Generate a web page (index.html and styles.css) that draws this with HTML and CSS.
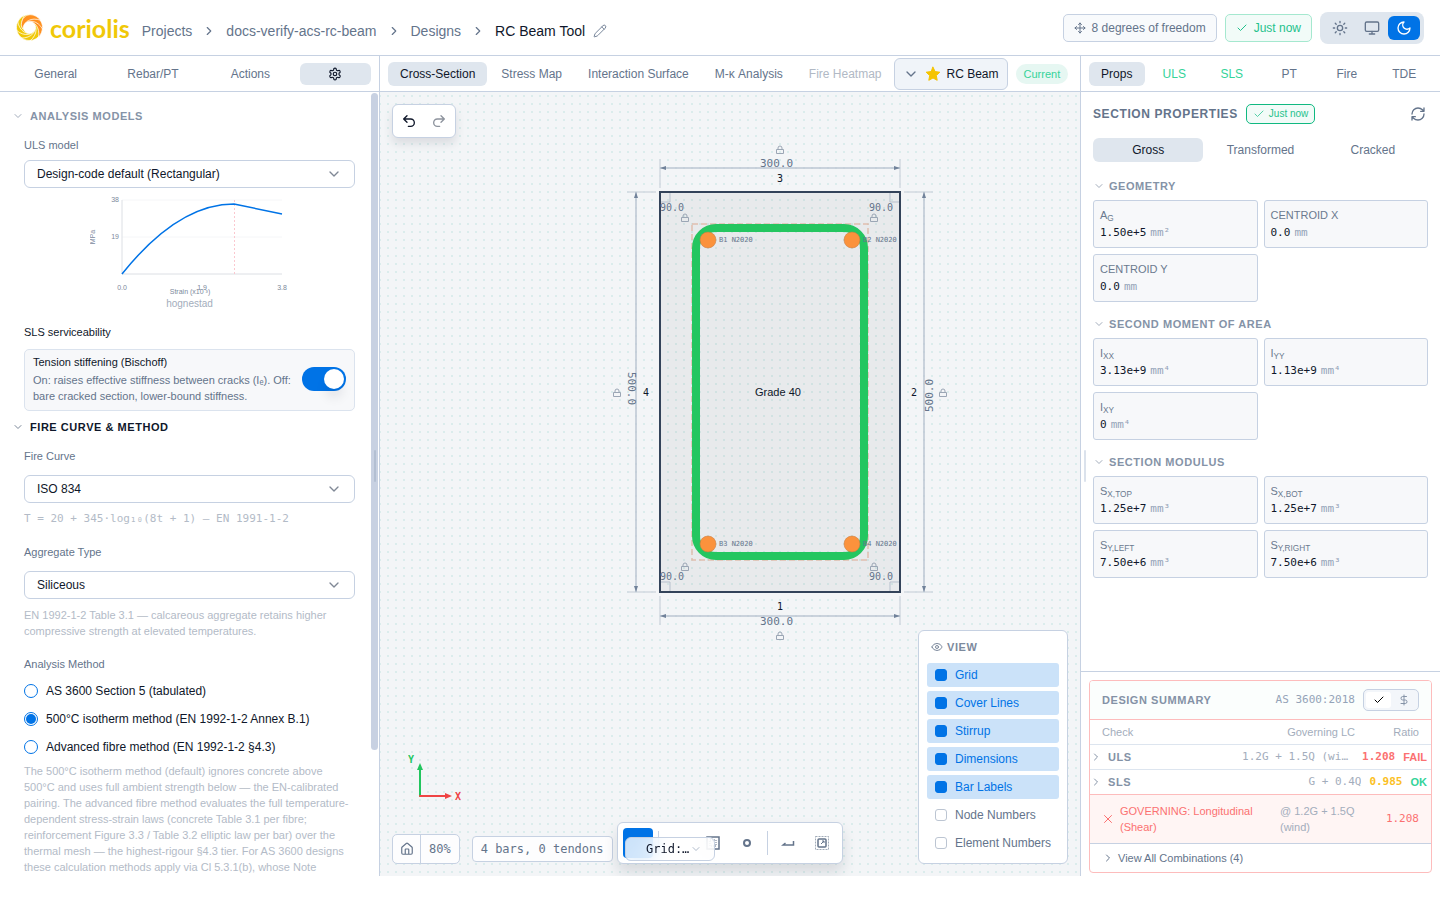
FILE: index.html
```html
<!DOCTYPE html>
<html lang="en">
<head>
<meta charset="utf-8">
<title>RC Beam Tool</title>
<link rel="stylesheet" href="styles.css">
</head>
<body>
<svg class="sprite" aria-hidden="true">
  <symbol id="chev-r" viewBox="0 0 24 24"><path d="m9 18 6-6-6-6"/></symbol>
  <symbol id="chev-d" viewBox="0 0 24 24"><path d="m6 9 6 6 6-6"/></symbol>
  <symbol id="check" viewBox="0 0 24 24"><path d="M20 6 9 17l-5-5"/></symbol>
  <symbol id="cross" viewBox="0 0 24 24"><path d="M19 5 5 19M5 5l14 14"/></symbol>
  <symbol id="blade" viewBox="-14 -14 28 28" overflow="visible"><path d="M4-13.200C-7-15.500-14.500-7-9.500 1.500C-8.500 3.500-7 5-4.500 5.500C-8.500-1-6-9.500 4-13.200Z"/></symbol>
  <symbol id="lock" viewBox="0 0 10 10"><path d="M1.500 4.500h7v4h-7zM3 4.500V3a2 2 0 0 1 4 0v1.500"/></symbol>
</svg>
<div class="app">
  <header class="topbar">
    <a class="logo" href="#">
      <svg class="logo-mark" viewBox="-14 -14 28 28">
        <g class="gold">
          <use href="#blade" x="-14" y="-14" width="28" height="28"/>
          <g transform="rotate(-40)"><use href="#blade" x="-14" y="-14" width="28" height="28"/></g>
          <g transform="rotate(-80)"><use href="#blade" x="-14" y="-14" width="28" height="28"/></g>
          <g transform="rotate(-120)"><use href="#blade" x="-14" y="-14" width="28" height="28"/></g>
          <g transform="rotate(-160)"><use href="#blade" x="-14" y="-14" width="28" height="28"/></g>
          <g transform="rotate(-200)"><use href="#blade" x="-14" y="-14" width="28" height="28"/></g>
        </g>
        <g class="orange">
          <g transform="rotate(120)"><use href="#blade" x="-14" y="-14" width="28" height="28"/></g>
          <g transform="rotate(80)"><use href="#blade" x="-14" y="-14" width="28" height="28"/></g>
          <g transform="rotate(40)"><use href="#blade" x="-14" y="-14" width="28" height="28"/></g>
        </g>
      </svg>
      <span class="wordmark">coriolis</span>
    </a>
    <nav class="crumbs">
      <a href="#">Projects</a><svg class="i14"><use href="#chev-r"/></svg>
      <a href="#">docs-verify-acs-rc-beam</a><svg class="i14"><use href="#chev-r"/></svg>
      <a href="#">Designs</a><svg class="i14"><use href="#chev-r"/></svg>
      <span class="here">RC Beam Tool</span>
      <button class="bare edit" aria-label="Rename"><svg class="i14 thin" viewBox="0 0 24 24"><path d="M21.200 6.800a1 1 0 0 0-4-4L3.800 16.200a2 2 0 0 0-.5.800L2 21.400a.5.5 0 0 0 .6.600l4.400-1.300a2 2 0 0 0 .8-.5zM15 5l4 4"/></svg></button>
    </nav>
    <div class="status">
      <span class="chip"><svg class="i12" viewBox="0 0 24 24"><path d="M12 2v20M2 12h20M15 19l-3 3-3-3M19 9l3 3-3 3M5 9l-3 3 3 3M9 5l3-3 3 3"/></svg>8 degrees of freedom</span>
      <span class="chip fresh"><svg class="i12"><use href="#check"/></svg>Just now</span>
      <div class="theme">
        <button aria-label="Light"><svg class="i16" viewBox="0 0 24 24"><circle cx="12" cy="12" r="4"/><path d="M12 2v2M12 20v2M4.900 4.900l1.400 1.400M17.700 17.700l1.400 1.400M2 12h2M20 12h2M6.300 17.700l-1.400 1.400M19.100 4.900l-1.400 1.400"/></svg></button>
        <button aria-label="System"><svg class="i16" viewBox="0 0 24 24"><rect x="2" y="3" width="20" height="14" rx="2"/><path d="M8 21h8M12 17v4"/></svg></button>
        <button class="on" aria-label="Dark"><svg class="i16" viewBox="0 0 24 24"><path d="M12 3a6 6 0 0 0 9 9 9 9 0 1 1-9-9Z"/></svg></button>
      </div>
    </div>
  </header>

  <main class="work">
    <aside class="left">
      <nav class="tabs left-tabs">
        <button>General</button><button>Rebar/PT</button><button>Actions</button>
        <button class="on gear" aria-label="Settings"><svg class="i14" viewBox="0 0 24 24"><path d="M12.200 2h-.4a2 2 0 0 0-2 2v.2a2 2 0 0 1-1 1.700l-.4.300a2 2 0 0 1-2 0l-.2-.1a2 2 0 0 0-2.700.7l-.2.400a2 2 0 0 0 .7 2.700l.2.100a2 2 0 0 1 1 1.700v.5a2 2 0 0 1-1 1.800l-.2.100a2 2 0 0 0-.7 2.700l.2.400a2 2 0 0 0 2.700.7l.2-.1a2 2 0 0 1 2 0l.4.300a2 2 0 0 1 1 1.700v.2a2 2 0 0 0 2 2h.4a2 2 0 0 0 2-2v-.2a2 2 0 0 1 1-1.700l.4-.3a2 2 0 0 1 2 0l.2.100a2 2 0 0 0 2.700-.7l.2-.4a2 2 0 0 0-.7-2.700l-.2-.1a2 2 0 0 1-1-1.800v-.5a2 2 0 0 1 1-1.700l.2-.1a2 2 0 0 0 .7-2.700l-.2-.4a2 2 0 0 0-2.700-.7l-.2.100a2 2 0 0 1-2 0l-.4-.3a2 2 0 0 1-1-1.700V4a2 2 0 0 0-2-2z"/><circle cx="12" cy="12" r="3"/></svg></button>
      </nav>
      <div class="scroll">
        <button class="sect muted"><svg class="i12"><use href="#chev-d"/></svg>ANALYSIS MODELS</button>
        <div class="fields">
          <label class="lbl" for="uls">ULS model</label>
          <div class="sel tight"><select id="uls"><option>Design-code default (Rectangular)</option></select><svg class="i16"><use href="#chev-d"/></svg></div>
          <svg class="curve" viewBox="0 0 200 104">
            <path class="gridline" d="M32 8h160M32 45h160"/>
            <path class="axis" d="M32 8v74h160"/>
            <path class="limit" d="M144.500 8v74"/>
            <path class="plot" d="M32 82Q88 12 144 12Q168 17 192 22"/>
            <text x="29" y="10" text-anchor="end">38</text><text x="29" y="47" text-anchor="end">19</text>
            <text x="32" y="98" text-anchor="middle">0.0</text><text x="112" y="98" text-anchor="middle">1.9</text><text x="192" y="98" text-anchor="middle">3.8</text>
            <text x="100" y="102" text-anchor="middle">Strain (x10⁻³)</text>
            <text transform="translate(5 45) rotate(-90)" text-anchor="middle">MPa</text>
          </svg>
          <p class="caption">hognestad</p>
          <h3 class="sub">SLS serviceability</h3>
          <div class="card-toggle">
            <div><label for="ts">Tension stiffening (Bischoff)</label>
            <p>On: raises effective stiffness between cracks (Iₑ). Off: bare cracked section, lower-bound stiffness.</p></div>
            <input id="ts" class="switch" type="checkbox" role="switch" checked>
          </div>
        </div>
        <button class="sect second"><svg class="i12"><use href="#chev-d"/></svg>FIRE CURVE &amp; METHOD</button>
        <div class="fields">
          <label class="lbl" for="fc">Fire Curve</label>
          <div class="sel"><select id="fc"><option>ISO 834</option></select><svg class="i16"><use href="#chev-d"/></svg></div>
          <p class="note mono">T = 20 + 345·log₁₀(8t + 1) — EN 1991-1-2</p>
          <label class="lbl far" for="ag">Aggregate Type</label>
          <div class="sel"><select id="ag"><option>Siliceous</option></select><svg class="i16"><use href="#chev-d"/></svg></div>
          <p class="note">EN 1992-1-2 Table 3.1 — calcareous aggregate retains higher compressive strength at elevated temperatures.</p>
          <fieldset>
            <legend class="lbl">Analysis Method</legend>
            <label class="radio"><input type="radio" name="m">AS 3600 Section 5 (tabulated)</label>
            <label class="radio"><input type="radio" name="m" checked>500°C isotherm method (EN 1992-1-2 Annex B.1)</label>
            <label class="radio"><input type="radio" name="m">Advanced fibre method (EN 1992-1-2 §4.3)</label>
          </fieldset>
          <p class="note">The 500°C isotherm method (default) ignores concrete above 500°C and uses full ambient strength below — the EN-calibrated pairing. The advanced fibre method evaluates the full temperature-dependent stress-strain laws (concrete Table 3.1 per fibre; reinforcement Figure 3.3 / Table 3.2 elliptic law per bar) over the thermal mesh — the highest-rigour §4.3 tier. For AS 3600 designs these calculation methods apply via Cl 5.3.1(b), whose Note</p>
        </div>
      </div>
      <div class="scrollbar"></div>
      <div class="grip"></div>
    </aside>

    <section class="center">
      <nav class="tabs mid-tabs">
        <button class="on">Cross-Section</button><button>Stress Map</button><button>Interaction Surface</button><button>M-κ Analysis</button><button class="off" disabled>Fire Heatmap</button>
        <button class="beam"><svg class="i16"><use href="#chev-d"/></svg><svg class="star" viewBox="0 0 16 16"><path d="m8 1.200 2.100 4.400 4.700.6-3.500 3.300.9 4.800L8 12l-4.200 2.300.9-4.800L1.200 6.200l4.700-.6z"/></svg>RC Beam</button>
        <span class="current">Current</span>
      </nav>
      <div class="canvas">
        <svg class="drawing" viewBox="0 0 700 784">
          <defs><marker id="arr" viewBox="0 0 6 4" refX="6" refY="2" markerWidth="6" markerHeight="4" markerUnits="userSpaceOnUse" orient="auto-start-reverse"><polygon points="0,0 6,2 0,4" fill="#71829a" stroke="none"/></marker></defs>
          <rect class="concrete" x="280" y="100" width="240" height="400"/>
          <path class="ext" d="M280 67v29M520 67v29M280 504v29M520 504v29M247 100h29M247 500h29M524 100h29M524 500h29"/>
          <path class="corner" d="M290 101v9h-9M510 101v9h9M290 499v-9h-9M510 499v-9h9"/>
          <g class="dim"><path d="M280 76H520"/><path d="M280 524H520"/><path d="M256 100V500"/><path d="M544 100V500"/></g>
          <rect class="cover" x="312" y="132" width="176" height="336"/>
          <rect class="stirrup" x="316" y="136" width="168" height="328" rx="20"/>
          <g class="bar"><circle cx="328" cy="148" r="8"/><circle cx="472" cy="148" r="8"/><circle cx="328" cy="452" r="8"/><circle cx="472" cy="452" r="8"/></g>
          <g class="tag"><text x="339" y="150">B1 N2020</text><text x="483" y="150">B2 N2020</text><text x="339" y="454">B3 N2020</text><text x="483" y="454">B4 N2020</text></g>
          <g class="len"><text x="380" y="75">300.0</text><text x="380" y="533">300.0</text><text transform="translate(248 280) rotate(90)">500.0</text><text transform="translate(553 320) rotate(-90)">500.0</text></g>
          <g class="ang"><text x="280" y="119">90.0</text><text x="489" y="119">90.0</text><text x="280" y="488">90.0</text><text x="489" y="488">90.0</text></g>
          <g class="edge"><text x="400" y="90">3</text><text x="400" y="518">1</text><text x="266" y="304">4</text><text x="534" y="304">2</text></g>
          <text class="grade" x="375" y="304">Grade 40</text>
          <g class="locks">
            <use href="#lock" x="395" y="53" width="10" height="10"/><use href="#lock" x="395" y="539" width="10" height="10"/>
            <use href="#lock" x="232" y="296" width="10" height="10"/><use href="#lock" x="558" y="296" width="10" height="10"/>
            <use href="#lock" x="300" y="121" width="10" height="10"/><use href="#lock" x="489" y="121" width="10" height="10"/>
            <use href="#lock" x="300" y="470" width="10" height="10"/><use href="#lock" x="489" y="470" width="10" height="10"/>
          </g>
        </svg>
        <div class="float history">
          <button aria-label="Undo"><svg class="i16" viewBox="0 0 24 24"><path d="M9 14 4 9l5-5M4 9h10.500a5.500 5.500 0 0 1 0 11H11"/></svg></button>
          <button aria-label="Redo" disabled><svg class="i16" viewBox="0 0 24 24"><path d="m15 14 5-5-5-5M20 9H9.500a5.500 5.500 0 0 0 0 11H13"/></svg></button>
        </div>
        <svg class="triad" viewBox="0 0 60 52">
          <path d="M12 42V14" stroke="#22c55e"/><path d="m12 9 3 7H9z" fill="#22c55e"/>
          <path d="M12 42h28" stroke="#ef4444"/><path d="m44 42-7-3v6z" fill="#ef4444"/>
          <text x="0" y="9" fill="#22c55e">Y</text><text x="47" y="46" fill="#ef4444">X</text>
        </svg>
        <div class="dock">
          <div class="zoomer"><button aria-label="Fit"><svg class="i14" viewBox="0 0 24 24"><path d="M15 21v-8a1 1 0 0 0-1-1h-4a1 1 0 0 0-1 1v8M3 10a2 2 0 0 1 .7-1.500l7-6a2 2 0 0 1 2.600 0l7 6A2 2 0 0 1 21 10v9a2 2 0 0 1-2 2H5a2 2 0 0 1-2-2z"/></svg></button><span>80%</span></div>
          <span class="count">4 bars, 0 tendons</span>
        </div>
        <div class="float tools">
          <button class="on" aria-label="Select"></button><i></i>
          <button aria-label="Polygon"></button>
          <button aria-label="Rectangle"><svg class="i14" viewBox="0 0 14 14"><rect x="1" y="1" width="12" height="12" stroke-width="1.500"/><rect x="4" y="4" width="6" height="6" stroke-width="1" stroke-dasharray="1 1"/></svg></button>
          <button aria-label="Bar"><svg class="i14" viewBox="0 0 14 14"><circle cx="7" cy="7" r="3" stroke-width="2"/></svg></button><i></i>
          <button aria-label="Stirrup"><svg class="i14" viewBox="0 0 14 14"><path d="M12.500 5v4H2l2.500-2" stroke-width="1.500"/></svg></button>
          <button aria-label="Section"><svg class="i14" viewBox="0 0 14 14"><rect x=".5" y=".5" width="13" height="13" stroke-width="1" stroke-dasharray="2 1" opacity=".6"/><rect x="3" y="3" width="8" height="8" rx="1" stroke-width="1.500"/><path d="M6 8l3-3M7 5h2v2" stroke-width="1"/></svg></button>
          <div class="gridsel"><select aria-label="Grid"><option>Grid:…</option></select><svg class="i12 thin"><use href="#chev-d"/></svg></div>
        </div>
        <div class="float view">
          <h2><svg class="i12" viewBox="0 0 24 24"><path d="M2 12.300a1 1 0 0 1 0-.7 10.800 10.800 0 0 1 20 0 1 1 0 0 1 0 .7 10.800 10.800 0 0 1-20 0z"/><circle cx="12" cy="12" r="3"/></svg>VIEW</h2>
          <label><input type="checkbox" checked>Grid</label>
          <label><input type="checkbox" checked>Cover Lines</label>
          <label><input type="checkbox" checked>Stirrup</label>
          <label><input type="checkbox" checked>Dimensions</label>
          <label><input type="checkbox" checked>Bar Labels</label>
          <label><input type="checkbox">Node Numbers</label>
          <label><input type="checkbox">Element Numbers</label>
        </div>
      </div>
    </section>

    <aside class="right">
      <nav class="tabs eq">
        <button class="on">Props</button><button class="ok">ULS</button><button class="ok">SLS</button><button>PT</button><button>Fire</button><button>TDE</button>
      </nav>
      <div class="props">
        <div class="props-head"><h2>SECTION PROPERTIES</h2><span class="chip small"><svg class="i12 thin"><use href="#check"/></svg>Just now</span>
          <button class="bare refresh" aria-label="Refresh"><svg class="i16" viewBox="0 0 24 24"><path d="M3 12a9 9 0 0 1 9-9 9.800 9.800 0 0 1 6.700 2.700L21 8M21 3v5h-5M21 12a9 9 0 0 1-9 9 9.800 9.800 0 0 1-6.700-2.700L3 16M8 16H3v5"/></svg></button></div>
        <nav class="tabs eq inner"><button class="on">Gross</button><button>Transformed</button><button>Cracked</button></nav>
        <button class="sect muted"><svg class="i12"><use href="#chev-d"/></svg>GEOMETRY</button>
        <dl><div><dt>A<sub>G</sub></dt><dd>1.50e+5<span>mm²</span></dd></div><div><dt>CENTROID X</dt><dd>0.0<span>mm</span></dd></div><div><dt>CENTROID Y</dt><dd>0.0<span>mm</span></dd></div></dl>
        <button class="sect muted"><svg class="i12"><use href="#chev-d"/></svg>SECOND MOMENT OF AREA</button>
        <dl><div><dt>I<sub>XX</sub></dt><dd>3.13e+9<span>mm⁴</span></dd></div><div><dt>I<sub>YY</sub></dt><dd>1.13e+9<span>mm⁴</span></dd></div><div><dt>I<sub>XY</sub></dt><dd>0<span>mm⁴</span></dd></div></dl>
        <button class="sect muted"><svg class="i12"><use href="#chev-d"/></svg>SECTION MODULUS</button>
        <dl><div><dt>S<sub>X,TOP</sub></dt><dd>1.25e+7<span>mm³</span></dd></div><div><dt>S<sub>X,BOT</sub></dt><dd>1.25e+7<span>mm³</span></dd></div><div><dt>S<sub>Y,LEFT</sub></dt><dd>7.50e+6<span>mm³</span></dd></div><div><dt>S<sub>Y,RIGHT</sub></dt><dd>7.50e+6<span>mm³</span></dd></div></dl>
      </div>
      <div class="foot">
        <section class="summary">
          <div class="sum-head"><h2>DESIGN SUMMARY</h2><span class="mono">AS 3600:2018</span>
            <div class="mini"><button class="on" aria-label="Checks"><svg class="i12"><use href="#check"/></svg></button><button aria-label="Cost"><svg class="i12" viewBox="0 0 24 24"><path d="M12 2v20M17 5H9.500a3.500 3.500 0 0 0 0 7h5a3.500 3.500 0 0 1 0 7H6"/></svg></button></div></div>
          <table>
            <thead><tr><th class="grow">Check</th><th>Governing LC</th><th class="ratio">Ratio</th></tr></thead>
            <tbody>
              <tr><td class="grow"><svg class="i12"><use href="#chev-r"/></svg><b>ULS</b></td><td class="mono lc">1.2G + 1.5Q (wind)</td><td class="mono red num">1.208</td><td class="red state">FAIL</td></tr>
              <tr><td class="grow"><svg class="i12"><use href="#chev-r"/></svg><b>SLS</b></td><td class="mono lc">G + 0.4Q</td><td class="mono amber num">0.985</td><td class="green state">OK</td></tr>
            </tbody>
            <tfoot><tr><td class="gov"><svg class="i12"><use href="#cross"/></svg><span>GOVERNING: Longitudinal (Shear)</span></td><td class="case">@ 1.2G + 1.5Q (wind)</td><td class="mono red ratio">1.208</td></tr></tfoot>
          </table>
          <button class="all"><svg class="i12"><use href="#chev-r"/></svg>View All Combinations (4)</button>
        </section>
      </div>
      <div class="grip"></div>
    </aside>
  </main>
</div>
</body>
</html>
```

FILE: styles.css
```css
* { box-sizing: border-box; margin: 0; }
:root {
  --line: #c6d1e2; --ink: #0f172a; --slate: #64748b; --mute: #94a3b8; --pill: #dfe6ee;
  --blue: #0073e6; --green: #34d399; --red: #fb7171; --pink: #fdbcbc;
  --mono: "DejaVu Sans Mono", monospace;
}
body { background: #fff; font: 12px/16px "Liberation Sans", Arial, sans-serif; color: var(--ink); }
button, select { font: inherit; color: inherit; background: none; border: 0; padding: 0; }
a { color: inherit; text-decoration: none; }
svg { fill: none; stroke: currentColor; stroke-width: 2; stroke-linecap: round; stroke-linejoin: round; flex: none; display: block; }
svg text { stroke: none; }
.sprite { position: absolute; width: 0; height: 0; }
.i12 { width: 12px; height: 12px; }
.i14 { width: 14px; height: 14px; }
.i16 { width: 16px; height: 16px; }
.thin { stroke-width: 1.5; }
.mono { font-family: var(--mono); font-size: 11px; }

.app { height: calc(100vh - 24px); min-height: 600px; display: flex; flex-direction: column; }
.topbar { height: 56px; flex: none; display: flex; align-items: center; padding: 0 16px; border-bottom: 1px solid var(--line); }
.logo { display: flex; align-items: center; gap: 7px; margin-right: 12px; }
.logo-mark { width: 27px; height: 27px; stroke: #fff; stroke-width: .7; }
.gold { fill: #f0c808; }
.orange { fill: #ff9020; }
.wordmark { font: 700 25px/28px Lato, sans-serif; color: #f0c808; }
.crumbs { display: flex; align-items: center; gap: 10px; font-size: 14px; color: var(--slate); padding-top: 6px; }
.here { color: var(--ink); }
.bare { display: flex; color: var(--slate); }
.edit { margin-left: -2px; }
.status { display: flex; align-items: center; gap: 8px; margin-left: auto; }
.chip { display: flex; align-items: center; gap: 6px; height: 28px; padding: 0 10px; border: 1px solid var(--line); border-radius: 5px; background: #f8fafc; color: var(--slate); }
.chip.fresh { color: #1fc28c; border-color: #a5e8cf; background: #f2fbf8; }
.chip.small { height: 20px; border-color: #10b981; background: #f2fbf8; color: #1fc28c; font-size: 10px; padding: 0 6px; gap: 4px; }
.theme { display: flex; padding: 4px; border-radius: 8px; background: var(--pill); color: var(--slate); }
.theme button { width: 32px; height: 24px; display: grid; place-items: center; border-radius: 6px; }
.theme .on { background: var(--blue); color: #fff; }

.work { flex: 1; min-height: 0; display: flex; }
.left { width: 380px; border-right: 1px solid var(--line); }
.right { width: 360px; border-left: 1px solid var(--line); }
.left, .right { flex: none; position: relative; display: flex; flex-direction: column; min-height: 0; }
.center { flex: 1; min-width: 0; display: flex; flex-direction: column; }
.tabs { height: 36px; flex: none; display: flex; align-items: center; gap: 2px; padding: 0 8px; border-bottom: 1px solid var(--line); color: var(--slate); }
.tabs button { height: 24px; padding: 0 12px; border-radius: 6px; white-space: nowrap; }
.tabs .on { background: var(--pill); color: var(--ink); }
.tabs .off { color: #b1b9c5; }
.tabs .ok { color: var(--green); }
.left-tabs button { flex: 1; height: 22px; }
.left-tabs .gear { flex: 0 0 71px; display: grid; place-items: center; }
.eq button { flex: 1; padding: 0; }
.tabs .beam { height: 32px; display: flex; align-items: center; gap: 6px; padding: 0 8px; margin-left: -2px; border: 1px solid var(--line); background: #f0f4f9; color: var(--ink); }
.beam > svg:first-child { color: var(--slate); }
.star { width: 16px; height: 16px; fill: #f5c400; stroke: #f5c400; stroke-width: 1; }
.current { margin-left: 6px; height: 20px; padding: 0 8px; border-radius: 10px; background: #e6f7f2; color: var(--green); font-size: 11px; line-height: 20px; }

.scroll { flex: 1; min-height: 0; overflow: hidden; padding: 16px 24px 0 12px; }
.scrollbar { position: absolute; right: 1px; top: 37px; width: 7px; bottom: 126px; border-radius: 4px; background: #c8d1e2; }
.grip { position: absolute; top: 394px; width: 2px; height: 32px; background: #b3bfd2; border-radius: 1px; }
.left .grip { right: 3px; }
.right .grip { left: 3px; background: #dbe2ec; }
.sect { display: flex; align-items: center; gap: 6px; font-size: 11px; font-weight: 700; letter-spacing: .05em; }
.sect svg { color: #7b8798; }
.muted { color: #8593a7; }
.muted svg { color: #a3adbc; }
.second { margin-top: 8px; }
.fields { padding: 13px 0 0 12px; font-size: 11px; }
.lbl { display: block; color: var(--slate); padding: 0; }
.sel { position: relative; margin-top: 11px; }
.sel.tight { margin-top: 7px; }
.sel select { width: 100%; height: 28px; padding: 0 12px; border: 1px solid var(--line); border-radius: 6px; background: #fff; font-size: 12px; appearance: none; display: block; }
.sel svg { position: absolute; right: 13px; top: 6px; color: #808896; pointer-events: none; }
.curve { width: 200px; height: 104px; margin: 4px auto 0; stroke-linecap: butt; }
.curve text { font-size: 7px; fill: #7c899c; }
.gridline { stroke: #f5f6f8; stroke-width: 1; }
.axis { stroke: #dcdfe4; stroke-width: 1; }
.limit { stroke: #fbc8cf; stroke-width: 1; stroke-dasharray: 2 2; }
.plot { stroke: var(--blue); stroke-width: 1.5; }
.caption { font-size: 10px; line-height: 16px; text-align: center; color: #a3adbc; }
.sub { font: inherit; margin-top: 12px; }
.card-toggle { display: flex; align-items: center; justify-content: space-between; gap: 8px; margin-top: 9px; padding: 4px 8px 6px; border: 1px solid #dbe3ee; border-radius: 5px; background: #f7f8fa; }
.card-toggle label { display: block; margin-bottom: 2px; }
.card-toggle p { color: var(--slate); }
.switch { appearance: none; flex: none; width: 44px; height: 24px; border-radius: 12px; background: var(--blue); position: relative; }
.switch::before { content: ""; position: absolute; right: 2px; top: 2px; width: 20px; height: 20px; border-radius: 50%; background: #fff; box-shadow: 0 10px 12px -2px rgba(15,23,42,.1); }
.note { margin-top: 8px; color: #b3bbc7; }
.far { margin-top: 17px; }
fieldset { border: 0; padding: 0; margin-top: 17px; display: grid; gap: 12px; }
fieldset legend { margin-bottom: 11px; }
.radio { display: flex; align-items: center; gap: 8px; font-size: 12px; }
.radio input { appearance: none; margin: 0; width: 14px; height: 14px; border: 1px solid var(--blue); border-radius: 50%; padding: 1px; }
.radio input:checked { background: var(--blue) content-box; }

.canvas { flex: 1; min-height: 0; position: relative; background: radial-gradient(circle, #dbecec 1px, transparent 1px) -4px 0 / 8px 8px #f3f5f7; }
.drawing { width: 100%; height: 100%; stroke-linecap: butt; stroke-linejoin: miter; }
.concrete { fill: rgba(30,30,30,.05); stroke: #33435a; }
.ext { stroke: #d4d9e1; stroke-width: 1.5; }
.corner { stroke: #b5bfcc; stroke-width: 1; }
.dim path { stroke: #bcc6d3; stroke-width: 1.5; marker-start: url(#arr); marker-end: url(#arr); }
.cover { stroke: #dfbfae; stroke-width: 1.5; stroke-dasharray: 6 3; }
.stirrup { stroke: #24c660; stroke-width: 8; }
.bar { fill: #fb923c; stroke: #c07b45; stroke-width: .5; }
.tag, .len, .ang, .edge { font-family: var(--mono); fill: var(--slate); }
.tag { font-size: 7px; }
.len { font-size: 11px; }
.ang { font-size: 10px; }
.edge { font-size: 10px; fill: var(--ink); text-anchor: middle; }
.grade { font-size: 11px; fill: var(--ink); }
.locks { stroke: #9ba6b5; stroke-width: 1; }
.float { position: absolute; display: flex; border: 1px solid var(--line); border-radius: 6px; background: #fff; }
.history { left: 12px; top: 12px; padding: 1px; box-shadow: 0 6px 10px rgba(15,23,42,.1); }
.history button { width: 30px; height: 30px; display: grid; place-items: center; }
.history button:disabled { color: #8d939d; }
.triad { position: absolute; left: 28px; bottom: 70px; width: 60px; height: 52px; stroke: none; }
.triad text { font: 700 10px var(--mono); }
.dock { position: absolute; left: 12px; bottom: 12px; display: flex; align-items: center; gap: 12px; font: 12px/24px var(--mono); color: var(--slate); }
.zoomer { display: flex; height: 30px; border: 1px solid var(--line); border-radius: 5px; background: #fdfdfe; line-height: 28px; }
.zoomer button { width: 28px; display: grid; place-items: center; border-right: 1px solid var(--line); }
.zoomer span { padding: 0 8px; }
.count { border: 1px solid var(--line); border-radius: 4px; background: #fdfdfe; padding: 0 8px; }
.tools { left: 237px; bottom: 12px; padding: 5px; gap: 4px; align-items: center; color: var(--slate); box-shadow: 0 8px 14px rgba(15,23,42,.12); }
.tools > button { width: 30px; height: 30px; border-radius: 4px; display: grid; place-items: center; }
.tools .on { background: var(--blue); }
.tools i { width: 1px; height: 24px; margin: 0 1px; background: var(--line); }
.tools button svg { stroke-linecap: butt; stroke-linejoin: miter; }
.gridsel { position: absolute; left: 7px; top: 14px; width: 90px; height: 24px; border: 1px solid var(--line); border-radius: 6px; background: rgba(255,255,255,.8); backdrop-filter: blur(10px); }
.gridsel select { appearance: none; width: 100%; height: 100%; padding-left: 20px; font: 12px/22px var(--mono); color: var(--ink); }
.gridsel svg { position: absolute; right: 12px; top: 5px; color: var(--mute); }
.view { right: 12px; bottom: 12px; width: 150px; padding: 8px; flex-direction: column; gap: 4px; }
.view h2 { display: flex; align-items: center; gap: 4px; height: 16px; margin: 0 4px 4px; font-size: 11px; letter-spacing: .05em; color: #7d8a9d; }
.view label { display: flex; align-items: center; gap: 8px; height: 24px; padding: 0 8px; border-radius: 3px; color: var(--slate); white-space: nowrap; }
.view label:has(:checked) { background: #cbe2f9; color: var(--blue); }
.view input { appearance: none; flex: none; margin: 0; width: 12px; height: 12px; border: 1px solid #bcc5d2; border-radius: 3px; background: #fff; }
.view input:checked { background: var(--blue); border-color: var(--blue); }

.props { flex: 1; min-height: 0; overflow: hidden; padding: 12px; }
.props-head { display: flex; align-items: center; gap: 8px; height: 20px; }
.props-head h2 { font-size: 12px; letter-spacing: .05em; color: var(--slate); }
.refresh { margin: 0 2px 0 auto; }
.inner { border: 0; padding: 0; height: 24px; margin: 14px 0 16px; }
.props dl { display: grid; grid-template-columns: 1fr 1fr; gap: 6px; margin: 6px 0 14px; }
.props .sect { gap: 4px; }
.props dl div { height: 48px; padding: 6px; border: 1px solid var(--line); border-radius: 3px; background: #f7f8fa; }
.props dt { font-size: 11px; line-height: 17px; height: 17px; color: #6b7a8f; }
.props sub { font-size: 75%; line-height: 0; vertical-align: -2px; }
.props dd { font: 11px/17px var(--mono); }
.props dd span { margin-left: 4px; color: var(--mute); }
.foot { border-top: 1px solid var(--line); padding: 8px 8px 3px; }
.summary { border: 1px solid var(--pink); border-radius: 4px; font-size: 11px; background: #fff; overflow: hidden; }
.sum-head { height: 39px; display: flex; align-items: center; gap: 8px; padding: 0 12px; background: #fbfefd; border-bottom: 1px solid var(--pink); color: var(--mute); }
.sum-head h2 { font-size: 11px; letter-spacing: .05em; color: #8492a6; margin-right: auto; }
.mini { display: flex; height: 22px; padding: 2px; border: 1px solid var(--line); border-radius: 5px; background: #f3f6fa; }
.mini button { width: 25px; display: grid; place-items: center; color: #8593a7; border-radius: 3px; }
.mini .on { background: #fff; color: #000; }
table, thead, tbody, tfoot { display: block; }
tr { display: flex; align-items: center; height: 25px; border-bottom: 1px solid #dde5ef; }
th, td { padding: 0; font-weight: 400; text-align: left; }
thead tr { padding: 0 12px; color: #a3adbc; }
.grow { flex: 1; display: flex; align-items: center; gap: 6px; color: #8492a6; }
.grow b { letter-spacing: .05em; }
thead .grow { color: inherit; }
.ratio { width: 64px; text-align: right; }
tbody tr { padding-right: 4px; gap: 8px; }
tbody tr:last-child { border-color: var(--pink); }
.lc { max-width: 112px; overflow: hidden; text-overflow: ellipsis; white-space: nowrap; color: #a3adbc; }
.red { color: var(--red); }
.amber { color: #fbbf24; }
.green { color: var(--green); }
.num, .state { font-weight: 700; }
tfoot tr { height: 49px; padding: 0 12px; background: #fff5f4; border-color: var(--line); }
.gov { flex: 1; display: flex; align-items: center; gap: 6px; color: var(--red); }
.case { width: 75px; color: #a3adbc; }
.all { width: 100%; height: 28px; display: flex; align-items: center; gap: 4px; padding: 0 12px; color: var(--slate); }
```
